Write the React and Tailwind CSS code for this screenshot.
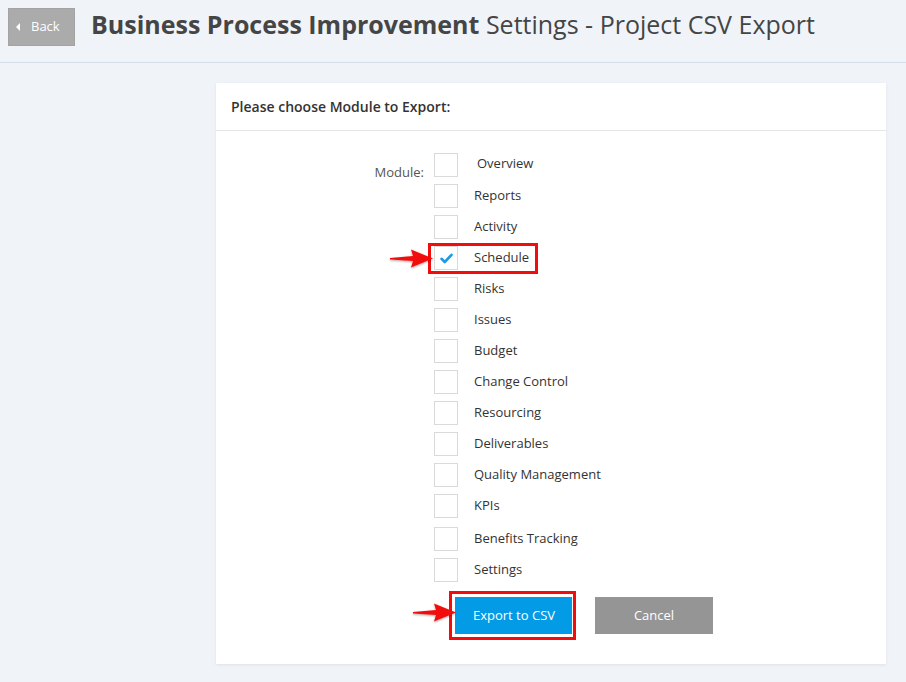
import React from "react";

const modules = [
  "Overview",
  "Reports",
  "Activity",
  "Schedule",
  "Risks",
  "Issues",
  "Budget",
  "Change Control",
  "Resourcing",
  "Deliverables",
  "Quality Management",
  "KPIs",
  "Benefits Tracking",
  "Settings",
];

function Arrow({ className }) {
  return (
    <svg className={className} width="46" height="22" viewBox="0 0 46 22">
      <defs>
        <filter id="ash" x="-20%" y="-40%" width="140%" height="180%">
          <feDropShadow dx="0" dy="1" stdDeviation="1" floodColor="#000" floodOpacity="0.35" />
        </filter>
      </defs>
      <polygon
        points="1,10 24,8 22,1.5 44,10.5 22,19.5 24,13 1,11.5"
        fill="#f20d0d"
        filter="url(#ash)"
      />
    </svg>
  );
}

export default function App() {
  return (
    <div
      className="min-h-[682px] bg-[#f0f4f9] text-[#333]"
      style={{ fontFamily: '"Open Sans", "Noto Sans", sans-serif' }}
    >
      <div className="h-[63px] border-b border-[#d3deea] flex items-start pl-2 pt-2">
        <button className="h-[38px] w-[67px] bg-[#ababab] border border-[#a3a3a3] text-white text-[13px] flex items-center pl-[7px]">
          <span className="w-0 h-0 border-y-[4px] border-y-transparent border-r-[4px] border-r-white mr-[11px]"></span>
          Back
        </button>
        <h1 className="ml-4 mt-[-3px] text-[25px] text-[#454545] leading-[38px]">
          <span className="font-bold">Business Process Improvement</span> Settings - Project CSV Export
        </h1>
      </div>

      <div className="ml-[216px] mt-[20px] w-[670px] bg-white shadow-[0_1px_3px_rgba(0,0,0,0.08)]">
        <div className="h-[48px] border-b border-[#e6e6e6] px-[15px] flex items-center text-[14px] font-semibold text-[#333]">
          Please choose Module to Export:
        </div>
        <div className="pt-[22px] pb-[30px]">
          <div className="flex">
            <div className="w-[208px] text-right text-[13px] text-[#555] pt-[10px]">Module:</div>
            <div className="ml-[10px] flex flex-col gap-[7px]">
              {modules.map((m) => {
                const checked = m === "Schedule";
                return (
                  <div
                    key={m}
                    className={
                      "relative flex items-center h-[24px]" +
                      (m === "Benefits Tracking" ? " mt-[2px]" : "")
                    }
                  >
                    <span className="w-[24px] h-[24px] border border-[#dadada] bg-white flex items-center justify-center">
                      {checked && (
                        <svg width="13" height="11" viewBox="0 0 13 11">
                          <path d="M1.5 5.8 L4.8 9 L11.5 1.8" fill="none" stroke="#1b9be8" strokeWidth="2.6" strokeLinecap="round" strokeLinejoin="round" />
                        </svg>
                      )}
                    </span>
                    <span className={"text-[13px] text-[#333] " + (m === "Overview" ? "ml-[19px] -mt-[2px]" : "ml-[16px]")}>{m}</span>
                    {checked && (
                      <>
                        <span className="absolute left-[-6px] top-[-3px] w-[110px] h-[31px] border-[3px] border-[#f20d0d]"></span>
                        <Arrow className="absolute left-[-45px] top-[2px]" />
                      </>
                    )}
                  </div>
                );
              })}
            </div>
          </div>
          <div className="flex ml-[239px] mt-[15px] gap-[22px]">
            <div className="relative">
              <button className="h-[37px] w-[118px] bg-[#039be5] text-white text-[13px] font-medium">Export to CSV</button>
              <span className="absolute left-[-6px] top-[-6px] w-[127px] h-[49px] border-[3px] border-[#f20d0d]"></span>
              <span className="absolute left-[-3px] top-[-3px] w-[121px] h-[43px] border-[1px] border-white"></span>
              <Arrow className="absolute left-[-43px] top-[5px]" />
            </div>
            <button className="h-[37px] w-[118px] bg-[#959595] text-white text-[13px] font-medium">Cancel</button>
          </div>
        </div>
      </div>
    </div>
  );
}
